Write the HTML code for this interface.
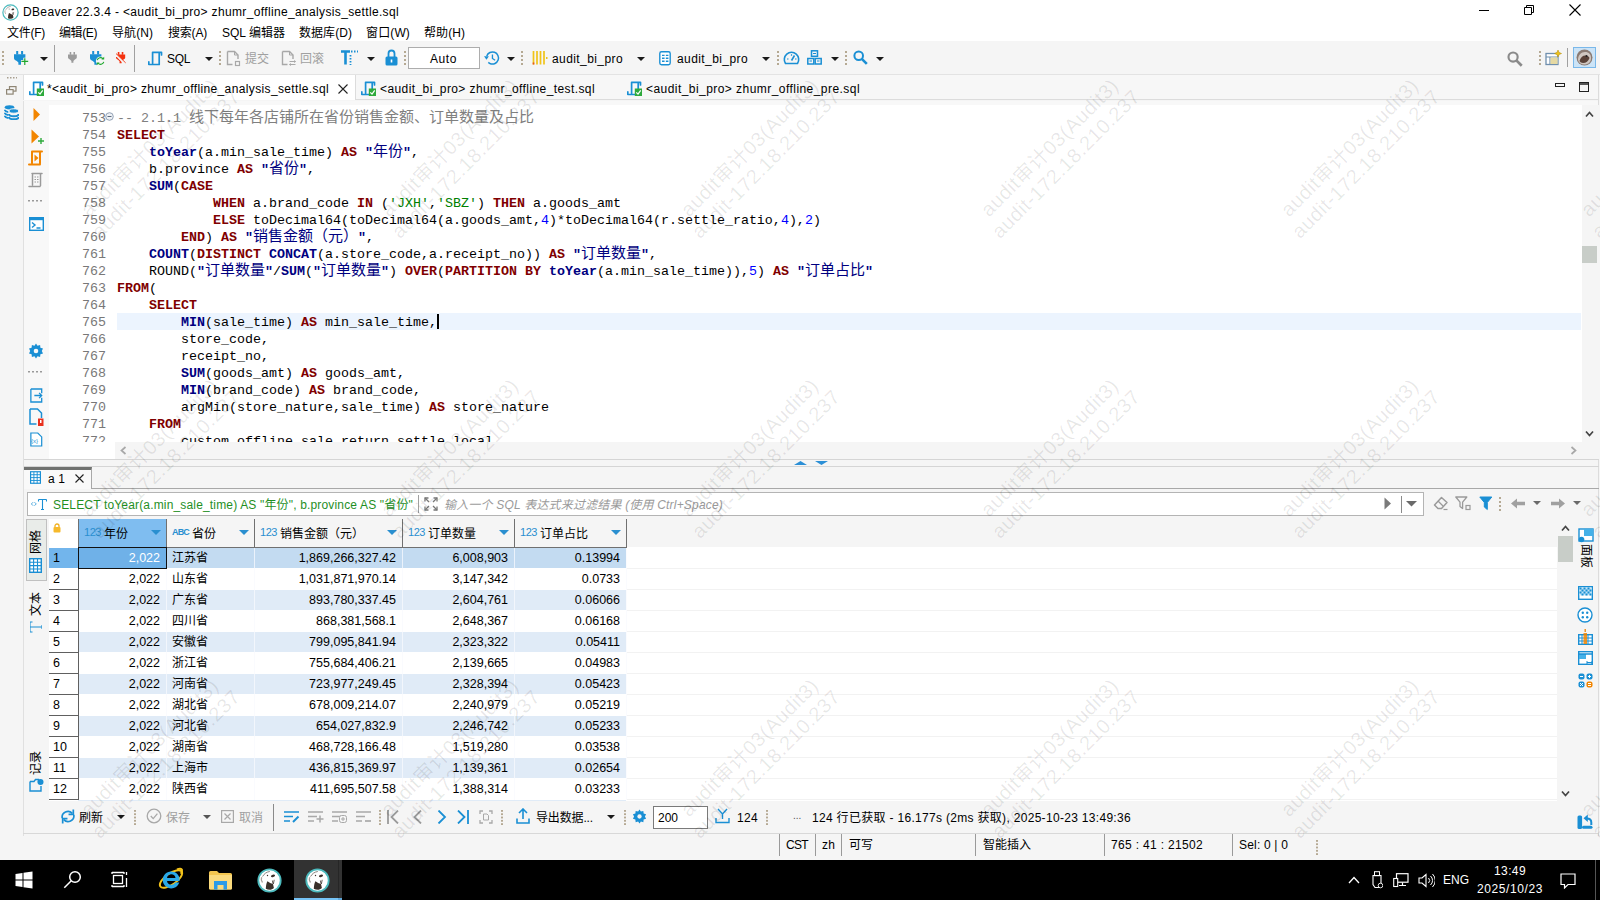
<!DOCTYPE html>
<html lang="zh"><head><meta charset="utf-8"><title>DBeaver</title><style>
html,body{margin:0;padding:0;}
body{width:1600px;height:900px;overflow:hidden;background:#f5f5f5;font-family:"Liberation Sans","Noto Sans CJK SC",sans-serif;position:relative;}
body div,body span.t,body svg,body pre{position:absolute;box-sizing:border-box;}
span.t{white-space:pre;}
pre{margin:0;font-family:"Liberation Mono","Noto Sans CJK SC",monospace;font-size:13.33px;line-height:17px;white-space:pre;color:#000;}
pre b.k{color:#7f0000;} pre b.f{color:#000080;} pre .s{color:#008000;} pre .n{color:#0000ff;}
pre .q{color:#000080;font-weight:bold;} pre .c{color:#808080;}
pre .l{display:block;height:17px;}
pre .z{font-size:15px;font-family:"Noto Sans CJK SC",sans-serif;line-height:0;font-weight:normal;}
.wm{color:rgba(0,0,0,0.095);font-size:20px;letter-spacing:0.55px;line-height:23px;white-space:pre;text-align:center;transform:rotate(-45deg);transform-origin:50% 50%;}
</style></head><body>
<div style="left:0px;top:0px;width:1600px;height:41px;background:#ffffff;"></div>
<svg style="left:2.2px;top:3.5px;" width="17" height="17" viewBox="0 0 25 25"><circle cx="12.500" cy="12.500" r="11.200" fill="#ffffff" stroke="#4cbabd" stroke-width="1.800"/><path d="M10.300 13.300c1.800 1.200 3.800 2.300 5.700 2.700l.9 3.900c-1.200 1.200-2.700 1.800-4.200 1.800-1.400 0-2.800-.3-3.900-.9.200-2.800.5-5.400 1.500-7.500z" fill="#3a302a"/><ellipse cx="16" cy="7.900" rx="2.100" ry="1.200" fill="#3a302a" transform="rotate(-15 16 7.900)"/><circle cx="10.500" cy="7.500" r=".700" fill="#3a302a"/><path d="M5.600 8.500c1.500-2.800 4-4.600 7.200-5" stroke="#6a625c" stroke-width=".800" fill="none"/><path d="M4.600 9.300c-.6 1.800-.3 3.800.9 5.200" stroke="#a8a09a" stroke-width="1.300" fill="none"/><path d="M17.200 11.800l-.8 4.200M15.400 12.500l.6 3.300" stroke="#3a302a" stroke-width=".800" fill="none"/></svg>
<span class="t" style="letter-spacing:0.349px;left:23px;top:3px;font-size:12px;line-height:18px;color:#000;">DBeaver 22.3.4 - &lt;audit_bi_pro&gt; zhumr_offline_analysis_settle.sql</span>
<svg style="left:1478px;top:4px;" width="12" height="12" viewBox="0 0 12 12"><path d="M1 6.500h10" stroke="#000" stroke-width="1" fill="none"/></svg>
<svg style="left:1523px;top:4px;" width="12" height="12" viewBox="0 0 12 12"><path d="M1.500 3.500h7v7h-7zM3.500 3.500v-2h7v7h-2" stroke="#000" stroke-width="1" fill="none"/></svg>
<svg style="left:1568px;top:3px;" width="14" height="14" viewBox="0 0 14 14"><path d="M1.500 1.500l11 11M12.500 1.500l-11 11" stroke="#000" stroke-width="1.100" fill="none"/></svg>
<span class="t" style="letter-spacing:-0.266px;left:7px;top:24px;font-size:12px;line-height:18px;color:#000;">文件(F)</span>
<span class="t" style="letter-spacing:-0.4px;left:59px;top:24px;font-size:12px;line-height:18px;color:#000;">编辑(E)</span>
<span class="t" style="letter-spacing:0.066px;left:112px;top:24px;font-size:12px;line-height:18px;color:#000;">导航(N)</span>
<span class="t" style="letter-spacing:-0.2px;left:168px;top:24px;font-size:12px;line-height:18px;color:#000;">搜索(A)</span>
<span class="t" style="letter-spacing:0.013px;left:222px;top:24px;font-size:12px;line-height:18px;color:#000;">SQL 编辑器</span>
<span class="t" style="letter-spacing:0.055px;left:299px;top:24px;font-size:12px;line-height:18px;color:#000;">数据库(D)</span>
<span class="t" style="letter-spacing:0.134px;left:366px;top:24px;font-size:12px;line-height:18px;color:#000;">窗口(W)</span>
<span class="t" style="letter-spacing:0.066px;left:424px;top:24px;font-size:12px;line-height:18px;color:#000;">帮助(H)</span>
<div style="left:0px;top:41px;width:1600px;height:33px;background:#f5f5f5;"></div>
<svg style="left:2px;top:51px;" width="2" height="14" viewBox="0 0 2 14"><rect x="0" y="0" width="2" height="2" fill="#b5a993"/><rect x="0" y="4" width="2" height="2" fill="#b5a993"/><rect x="0" y="8" width="2" height="2" fill="#b5a993"/><rect x="0" y="12" width="2" height="2" fill="#b5a993"/></svg>
<svg style="left:13.8px;top:51.2px;" width="17.4" height="16" viewBox="0 0 17.400 16.000"><path d="M2.200 0h2v3.500h-2zM7.100 0h2v3.500h-2z" fill="#1a8fd4"/><path d="M0 3.200H11.400V7.200C11.400 8.600 9.600 9.300 8.600 9.900L7 11.600V13.800H4.400V11.600L2.800 9.900C1.800 9.300 0 8.600 0 7.200Z" fill="#1a8fd4"/><path d="M10.800 6.800v7.600M7 10.500h7.500" stroke="#f5f5f5" stroke-width="3"/><path d="M10.800 7.200v6.800M7.400 10.400h6.800" stroke="#1fa82e" stroke-width="1.200"/></svg>
<svg style="left:40px;top:57px;" width="8" height="5.0" viewBox="0 0 8 5.0"><path d="M0 0h8l-4.0 4.0z" fill="#1a1a1a"/></svg>
<div style="left:54px;top:45px;width:1px;height:27px;background:#a0a0a0;"></div>
<svg style="left:68px;top:52px;" width="14.8" height="13.6" viewBox="0 0 19.173 17.618"><path d="M2.200 0h2v3.500h-2zM7.100 0h2v3.500h-2z" fill="#9b9b9b"/><path d="M0 3.200H11.400V7.200C11.400 8.600 9.600 9.300 8.600 9.900L7 11.600V13.800H4.400V11.600L2.800 9.900C1.800 9.300 0 8.600 0 7.200Z" fill="#9b9b9b"/></svg>
<svg style="left:89.6px;top:51.2px;" width="17.4" height="16" viewBox="0 0 17.400 16.000"><path d="M2.200 0h2v3.500h-2zM7.100 0h2v3.500h-2z" fill="#1a8fd4"/><path d="M0 3.200H11.400V7.200C11.400 8.600 9.600 9.300 8.600 9.900L7 11.600V13.800H4.400V11.600L2.800 9.900C1.800 9.300 0 8.600 0 7.200Z" fill="#1a8fd4"/><circle cx="10.500" cy="10" r="4.600" fill="#f5f5f5"/><path d="M7.200 9.200a3.400 3.400 0 0 1 5.800-1.400M13.800 10.800a3.400 3.400 0 0 1-5.800 1.400" stroke="#1fa82e" stroke-width="1.100" fill="none"/><path d="M14.200 5.800v2.800h-2.800zM6.800 14.200v-2.800h2.800z" fill="#1fa82e"/></svg>
<svg style="left:115.6px;top:52px;" width="15.2" height="13.6" viewBox="0 0 18.835 16.852"><path d="M2.200 0h2v3.500h-2zM7.100 0h2v3.500h-2z" fill="#f4320f"/><path d="M0 3.200H11.400V7.200C11.400 8.600 9.600 9.300 8.600 9.900L7 11.600V13.800H4.400V11.600L2.800 9.900C1.800 9.300 0 8.600 0 7.200Z" fill="#f4320f"/><path d="M-1 2.500l12 12" stroke="#f5f5f5" stroke-width="2.600"/><path d="M-2.500 -0.500l14.500 14" stroke="#f4320f" stroke-width="1.100"/></svg>
<div style="left:134px;top:45px;width:1px;height:27px;background:#a0a0a0;"></div>
<svg style="left:148px;top:50.5px;" width="16" height="16" viewBox="0 0 16 16"><path d="M4.600 12.200V1.300h8.900v2.700M11.200 1.300v12.200H0.800v-2.700" stroke="#1a8fd4" stroke-width="1.700" fill="none" stroke-linejoin="round" stroke-linecap="round"/></svg>
<span class="t" style="letter-spacing:-0.339px;left:167px;top:50px;font-size:12px;line-height:18px;color:#000;">SQL</span>
<svg style="left:205px;top:57px;" width="8" height="5.0" viewBox="0 0 8 5.0"><path d="M0 0h8l-4.0 4.0z" fill="#1a1a1a"/></svg>
<svg style="left:219px;top:51px;" width="2" height="14" viewBox="0 0 2 14"><rect x="0" y="0" width="2" height="2" fill="#b5a993"/><rect x="0" y="4" width="2" height="2" fill="#b5a993"/><rect x="0" y="8" width="2" height="2" fill="#b5a993"/><rect x="0" y="12" width="2" height="2" fill="#b5a993"/></svg>
<svg style="left:226px;top:50px;" width="17" height="17" viewBox="0 0 17 17"><path d="M1.500 1.500h7l3.500 3.500v4M1.500 1.500v13h5" stroke="#a8a8a8" stroke-width="1.400" fill="none"/><path d="M8.500 1.500v3.500h3.500" stroke="#a8a8a8" stroke-width="1" fill="none"/><rect x="9.500" y="11.500" width="4" height="4" stroke="#a8a8a8" fill="none" stroke-width="1.200"/></svg>
<span class="t" style="letter-spacing:-0.008px;left:245px;top:50px;font-size:12px;line-height:18px;color:#a0a0a0;">提交</span>
<svg style="left:281px;top:50px;" width="17" height="17" viewBox="0 0 17 17"><path d="M1.500 1.500h7l3.500 3.500v4M1.500 1.500v13h5" stroke="#a8a8a8" stroke-width="1.400" fill="none"/><path d="M8.500 1.500v3.500h3.500" stroke="#a8a8a8" stroke-width="1" fill="none"/><path d="M8.500 11.500h6M8.500 14.500h6" stroke="#a8a8a8" stroke-width="1"/><path d="M13 10l2 1.500-2 1.500zM10 13l-2 1.500 2 1.500z" fill="#a8a8a8"/></svg>
<span class="t" style="letter-spacing:-0.008px;left:300px;top:50px;font-size:12px;line-height:18px;color:#a0a0a0;">回滚</span>
<svg style="left:341px;top:50px;" width="18" height="16" viewBox="0 0 18 16"><path d="M0 1.500h9M4.500 1.500v13" stroke="#1a8fd4" stroke-width="2.600"/><path d="M10 1.500h7M9.500 5v10" stroke="#1a8fd4" stroke-width="1.800" stroke-dasharray="1.500 1.500"/></svg>
<svg style="left:367px;top:57px;" width="8" height="5.0" viewBox="0 0 8 5.0"><path d="M0 0h8l-4.0 4.0z" fill="#1a1a1a"/></svg>
<svg style="left:385px;top:49px;" width="13" height="17" viewBox="0 0 13 17"><path d="M3.500 8v-3.500a3 3 0 0 1 6 0v3.500" stroke="#1a8fd4" stroke-width="1.800" fill="none"/><rect x="0.500" y="7.500" width="12" height="9" rx="1.500" fill="#1a8fd4"/><rect x="5.700" y="10.500" width="1.600" height="3" fill="#fff"/></svg>
<svg style="left:404px;top:51px;" width="2" height="14" viewBox="0 0 2 14"><rect x="0" y="0" width="2" height="2" fill="#b5a993"/><rect x="0" y="4" width="2" height="2" fill="#b5a993"/><rect x="0" y="8" width="2" height="2" fill="#b5a993"/><rect x="0" y="12" width="2" height="2" fill="#b5a993"/></svg>
<div style="left:408px;top:47px;width:72px;height:22px;background:#fff;border:1px solid #adadad;"></div>
<span class="t" style="letter-spacing:0.578px;left:430px;top:50px;font-size:12px;line-height:18px;color:#000;">Auto</span>
<svg style="left:484px;top:50px;" width="16" height="16" viewBox="0 0 18 18"><circle cx="9.500" cy="9" r="6.800" stroke="#1a8fd4" stroke-width="1.700" fill="none" stroke-dasharray="34 9" transform="rotate(200 9.500 9)"/><path d="M9.500 5v4.500l3 2" stroke="#1a8fd4" stroke-width="1.500" fill="none"/><path d="M0 7h5.500l-2.700 4z" fill="#1a8fd4"/></svg>
<svg style="left:507px;top:57px;" width="8" height="5.0" viewBox="0 0 8 5.0"><path d="M0 0h8l-4.0 4.0z" fill="#1a1a1a"/></svg>
<svg style="left:521px;top:51px;" width="2" height="14" viewBox="0 0 2 14"><rect x="0" y="0" width="2" height="2" fill="#b5a993"/><rect x="0" y="4" width="2" height="2" fill="#b5a993"/><rect x="0" y="8" width="2" height="2" fill="#b5a993"/><rect x="0" y="12" width="2" height="2" fill="#b5a993"/></svg>
<svg style="left:532px;top:51px;" width="16" height="14" viewBox="0 0 16 14"><path d="M1.500 0v13.500M5 0v13.500M8.500 0v13.500M12 0v13.500" stroke="#f0c419" stroke-width="1.700"/><rect x="0.700" y="11.500" width="1.600" height="2" fill="#e8501e"/><rect x="14" y="6" width="1.500" height="2" fill="#f0c419"/></svg>
<span class="t" style="letter-spacing:0.411px;left:552px;top:50px;font-size:12px;line-height:18px;color:#000;">audit_bi_pro</span>
<svg style="left:637px;top:57px;" width="8" height="5.0" viewBox="0 0 8 5.0"><path d="M0 0h8l-4.0 4.0z" fill="#1a1a1a"/></svg>
<svg style="left:658.5px;top:51px;" width="12" height="14.5" viewBox="0 0 14 17"><rect x="0.900" y="0.900" width="12.200" height="15.200" rx="2" stroke="#1a8fd4" stroke-width="1.600" fill="#fff"/><path d="M3.500 5h3M3.500 8.500h3M3.500 12h3M8 5h3M8 8.500h3M8 12h3" stroke="#1a8fd4" stroke-width="1.500"/></svg>
<span class="t" style="letter-spacing:0.411px;left:677px;top:50px;font-size:12px;line-height:18px;color:#000;">audit_bi_pro</span>
<svg style="left:762px;top:57px;" width="8" height="5.0" viewBox="0 0 8 5.0"><path d="M0 0h8l-4.0 4.0z" fill="#1a1a1a"/></svg>
<svg style="left:777px;top:51px;" width="2" height="14" viewBox="0 0 2 14"><rect x="0" y="0" width="2" height="2" fill="#b5a993"/><rect x="0" y="4" width="2" height="2" fill="#b5a993"/><rect x="0" y="8" width="2" height="2" fill="#b5a993"/><rect x="0" y="12" width="2" height="2" fill="#b5a993"/></svg>
<svg style="left:783px;top:50px;" width="17" height="15" viewBox="0 0 17 15"><path d="M2.500 13.500a7.200 7.200 0 1 1 12 0z" stroke="#1a8fd4" stroke-width="1.600" fill="none" stroke-linejoin="round"/><path d="M8.500 10.500l3-5" stroke="#1a8fd4" stroke-width="1.600"/><path d="M4 9h1.500M8.500 4.200v1.500M12 9h1.500" stroke="#1a8fd4" stroke-width="1.200"/></svg>
<svg style="left:807px;top:50px;" width="15" height="15" viewBox="0 0 15 15"><rect x="4.500" y="0.800" width="6" height="5.500" stroke="#1a8fd4" stroke-width="1.500" fill="none"/><rect x="0.800" y="8.500" width="6" height="5.500" stroke="#1a8fd4" stroke-width="1.500" fill="none"/><rect x="8.200" y="8.500" width="6" height="5.500" stroke="#1a8fd4" stroke-width="1.500" fill="none"/><path d="M6 3.500h3M2.500 11h2.500M10 11h2.500" stroke="#1a8fd4" stroke-width="1"/></svg>
<svg style="left:831px;top:57px;" width="8" height="5.0" viewBox="0 0 8 5.0"><path d="M0 0h8l-4.0 4.0z" fill="#1a1a1a"/></svg>
<svg style="left:845px;top:51px;" width="2" height="14" viewBox="0 0 2 14"><rect x="0" y="0" width="2" height="2" fill="#b5a993"/><rect x="0" y="4" width="2" height="2" fill="#b5a993"/><rect x="0" y="8" width="2" height="2" fill="#b5a993"/><rect x="0" y="12" width="2" height="2" fill="#b5a993"/></svg>
<svg style="left:853px;top:50px;" width="15" height="15" viewBox="0 0 15 15"><circle cx="5.700" cy="5.700" r="4.300" stroke="#1a8fd4" stroke-width="2" fill="none"/><path d="M8.800 8.800l5 5" stroke="#1a8fd4" stroke-width="2.600"/></svg>
<svg style="left:876px;top:57px;" width="8" height="5.0" viewBox="0 0 8 5.0"><path d="M0 0h8l-4.0 4.0z" fill="#1a1a1a"/></svg>
<svg style="left:1507px;top:51px;" width="16" height="16" viewBox="0 0 15 15"><circle cx="5.700" cy="5.700" r="4.300" stroke="#8a8a8a" stroke-width="2" fill="none"/><path d="M8.800 8.800l5 5" stroke="#8a8a8a" stroke-width="2.600"/></svg>
<svg style="left:1539px;top:51px;" width="2" height="14" viewBox="0 0 2 14"><rect x="0" y="0" width="2" height="2" fill="#b5a993"/><rect x="0" y="4" width="2" height="2" fill="#b5a993"/><rect x="0" y="8" width="2" height="2" fill="#b5a993"/><rect x="0" y="12" width="2" height="2" fill="#b5a993"/></svg>
<svg style="left:1545px;top:50px;" width="17" height="16" viewBox="0 0 17 16"><rect x="1" y="3.500" width="12" height="11" fill="#fff" stroke="#6f8fae" stroke-width="1.300"/><path d="M1 7h12M5 7v7.500" stroke="#6f8fae" stroke-width="1.200"/><rect x="5.500" y="7.500" width="7" height="6.500" fill="#e5d9a3"/><path d="M13 0l1 2.500 2.500 1-2.500 1-1 2.500-1-2.500-2.500-1 2.500-1z" fill="#f0c419" stroke="#b89210" stroke-width=".6"/></svg>
<div style="left:1567px;top:48px;width:1px;height:19px;background:#a0a0a0;"></div>
<div style="left:1573px;top:47px;width:23px;height:21px;background:#cce4f7;border:1px solid #7ab8ea;"></div>
<svg style="left:1576px;top:49px;" width="17" height="17" viewBox="0 0 17 17"><circle cx="8.500" cy="8.500" r="8" fill="#8a7a72"/><path d="M2 11c0-5 3-8 7-8s6 2.500 6 6-2 6-6 6.500c-3 .3-6-1-7-4.500z" fill="#cfc6c0"/><path d="M3.500 12c1-3.500 3-5.500 6-5.500 2 0 3.500 1 4 2.500-1 3-3.500 5-6.500 5-1.500 0-2.800-.8-3.500-2z" fill="#5a4238"/><circle cx="10.500" cy="7" r="1" fill="#222"/></svg>
<div style="left:0px;top:74px;width:1600px;height:1px;background:#e3e3e3;"></div>
<svg style="left:7px;top:76.5px;" width="10" height="2" viewBox="0 0 10 2"><rect x="0" y="0" width="1.500" height="1.500" fill="#a89f90"/><rect x="3" y="0" width="1.500" height="1.500" fill="#a89f90"/><rect x="6" y="0" width="1.500" height="1.500" fill="#a89f90"/><rect x="9" y="0" width="1.500" height="1.500" fill="#a89f90"/></svg>
<svg style="left:6px;top:86px;" width="11" height="9" viewBox="0 0 11 9"><rect x="3.500" y="0.600" width="6.500" height="4.500" fill="none" stroke="#8f8675" stroke-width="1.200"/><rect x="0.600" y="3.600" width="6.500" height="4.500" fill="#f5f5f5" stroke="#8f8675" stroke-width="1.200"/></svg>
<div style="left:23px;top:75px;width:1575px;height:25px;background:#f7f7f7;border-bottom:1px solid #dcdcdc;"></div>
<div style="left:23px;top:75px;width:333px;height:25px;background:#ffffff;border-right:1px solid #dcdcdc;border-left:1px solid #e0e0e0;"></div>
<svg style="left:29px;top:80.5px;" width="16" height="16" viewBox="0 0 16 16"><path d="M4.600 12.200V1.300h8.900v2.700M11.200 1.300v12.200H0.800v-2.700" stroke="#1a8fd4" stroke-width="1.700" fill="none" stroke-linejoin="round" stroke-linecap="round"/><rect x="7.800" y="7.500" width="7.200" height="7.500" fill="#2eaa3c"/><path d="M9.300 11.300l1.700 1.800 2.700-3.800" stroke="#fff" stroke-width="1.200" fill="none"/></svg>
<span class="t" style="letter-spacing:0.368px;left:47px;top:80px;font-size:12px;line-height:18px;color:#000;">*&lt;audit_bi_pro&gt; zhumr_offline_analysis_settle.sql</span>
<svg style="left:338px;top:84px;" width="10" height="10" viewBox="0 0 10 10"><path d="M0.500 0.500l9 9M9.500 0.500l-9 9" stroke="#222" stroke-width="1.100"/></svg>
<svg style="left:360.6px;top:80.5px;" width="16" height="16" viewBox="0 0 16 16"><path d="M4.600 12.200V1.300h8.900v2.700M11.200 1.300v12.200H0.800v-2.700" stroke="#1a8fd4" stroke-width="1.700" fill="none" stroke-linejoin="round" stroke-linecap="round"/><rect x="7.800" y="7.500" width="7.200" height="7.500" fill="#2eaa3c"/><path d="M9.300 11.300l1.700 1.800 2.700-3.800" stroke="#fff" stroke-width="1.200" fill="none"/></svg>
<span class="t" style="letter-spacing:0.408px;left:380px;top:80px;font-size:12px;line-height:18px;color:#000;">&lt;audit_bi_pro&gt; zhumr_offline_test.sql</span>
<svg style="left:626.6px;top:80.5px;" width="16" height="16" viewBox="0 0 16 16"><path d="M4.600 12.200V1.300h8.900v2.700M11.200 1.300v12.200H0.800v-2.700" stroke="#1a8fd4" stroke-width="1.700" fill="none" stroke-linejoin="round" stroke-linecap="round"/><rect x="7.800" y="7.500" width="7.200" height="7.500" fill="#2eaa3c"/><path d="M9.300 11.300l1.700 1.800 2.700-3.800" stroke="#fff" stroke-width="1.200" fill="none"/></svg>
<span class="t" style="letter-spacing:0.447px;left:646px;top:80px;font-size:12px;line-height:18px;color:#000;">&lt;audit_bi_pro&gt; zhumr_offline_pre.sql</span>
<svg style="left:1555px;top:83px;" width="10" height="4" viewBox="0 0 10 4"><rect x="0.500" y="0.500" width="9" height="3" fill="none" stroke="#222" stroke-width="1"/></svg>
<svg style="left:1579px;top:82px;" width="10" height="10" viewBox="0 0 10 10"><rect x="0.500" y="0.500" width="9" height="9" fill="none" stroke="#222" stroke-width="1"/><path d="M0.500 2h9" stroke="#222" stroke-width="1.500"/></svg>
<div style="left:23px;top:101px;width:1px;height:735px;background:#e0e0e0;"></div>
<div style="left:24px;top:101px;width:1575px;height:358px;background:#f8f8f8;"></div>
<div style="left:1598px;top:75px;width:1px;height:761px;background:#dcdcdc;"></div>
<svg style="left:3.8px;top:104.5px;" width="15" height="15" viewBox="0 0 15 15"><ellipse cx="5.500" cy="2.300" rx="4.800" ry="2.100" fill="#1a8fd4"/><path d="M0.800 4.800c0 1.200 1.500 2 3.500 2.300M0.800 7.800c0 1.200 1.500 2 3.500 2.300M0.800 10.800c0 1.200 1.500 2 3.500 2.300" stroke="#1a8fd4" stroke-width="1.800" fill="none"/><ellipse cx="9.800" cy="6" rx="4.800" ry="2.200" fill="#1a8fd4" stroke="#f5f5f5" stroke-width="1"/><path d="M5 9c0 1.300 2.200 2.300 4.800 2.300s4.800-1 4.800-2.300M5 12c0 1.300 2.200 2.300 4.800 2.300s4.800-1 4.800-2.300" stroke="#1a8fd4" stroke-width="1.900" fill="none"/></svg>
<div style="left:49px;top:105px;width:1533px;height:337px;background:#ffffff;"></div>
<div style="left:49px;top:442px;width:66px;height:17px;background:#ffffff;"></div>
<div style="left:117px;top:313px;width:1464px;height:17px;background:#ecf4fe;"></div>
<svg style="left:32.5px;top:107.5px;" width="8" height="13" viewBox="0 0 8 13"><path d="M0.500 0l6.500 6.500-6.500 6.500z" fill="#f28500"/></svg>
<svg style="left:30px;top:129px;" width="16" height="16" viewBox="0 0 16 16"><path d="M1.500 0.500l7.500 7-7.500 7z" fill="#f28500"/><path d="M11 9v6M8 12h6" stroke="#2eaa3c" stroke-width="1.400"/></svg>
<svg style="left:28px;top:150px;" width="16" height="17" viewBox="0 0 16 17"><path d="M4 1.500h10M12 1.500v12M4 2v11M1 14.500h11" stroke="#f28500" stroke-width="2" fill="none" stroke-linecap="round"/><path d="M6.500 4.500l4 3.500-4 3.500z" fill="#f28500"/></svg>
<svg style="left:28px;top:172px;" width="16" height="17" viewBox="0 0 16 17"><path d="M4 1.500h10M12.500 1.500v12M4.500 2v11M1 14.500h11" stroke="#9a9a9a" stroke-width="1.500" fill="none" stroke-linecap="round"/><path d="M6.500 5h4.500M6.500 7.500h4.500M6.500 10h4.500" stroke="#9a9a9a" stroke-width="1" stroke-dasharray="1.500 1"/></svg>
<svg style="left:28px;top:200px;" width="14" height="2" viewBox="0 0 14 2"><rect x="0" y="0" width="2" height="1.500" fill="#9a9a9a"/><rect x="4" y="0" width="2" height="1.500" fill="#9a9a9a"/><rect x="8" y="0" width="2" height="1.500" fill="#9a9a9a"/><rect x="12" y="0" width="2" height="1.500" fill="#9a9a9a"/></svg>
<svg style="left:29px;top:217px;" width="15" height="14" viewBox="0 0 15 14"><rect x="0.700" y="0.700" width="13.600" height="12.600" fill="#fff" stroke="#1a8fd4" stroke-width="1.400"/><rect x="0.700" y="0.700" width="13.600" height="2.500" fill="#1a8fd4"/><path d="M3 5.500l3 2.500-3 2.500M7.500 11h4" stroke="#1a8fd4" stroke-width="1.400" fill="none"/></svg>
<svg style="left:28px;top:343px;" width="16" height="16" viewBox="0 0 16 16"><path d="M8 0.500l1.500 2.200 2.600-.7.300 2.700 2.600.8-1.200 2.500 1.200 2.500-2.600.8-.3 2.700-2.600-.7-1.500 2.200-1.500-2.200-2.600.7-.3-2.700-2.600-.8 1.200-2.500-1.200-2.500 2.600-.8.300-2.700 2.600.7z" fill="#1a8fd4"/><circle cx="8" cy="8" r="2.300" fill="#f8f8f8"/></svg>
<svg style="left:28px;top:371px;" width="14" height="2" viewBox="0 0 14 2"><rect x="0" y="0" width="2" height="1.500" fill="#9a9a9a"/><rect x="4" y="0" width="2" height="1.500" fill="#9a9a9a"/><rect x="8" y="0" width="2" height="1.500" fill="#9a9a9a"/><rect x="12" y="0" width="2" height="1.500" fill="#9a9a9a"/></svg>
<svg style="left:30px;top:388px;" width="13" height="15" viewBox="0 0 15 17"><path d="M1 1h12.500v5M13.500 11v5h-12.500v-15" stroke="#1a8fd4" stroke-width="1.500" fill="none"/><path d="M5 8.500h8M10.500 5.500l3 3-3 3" stroke="#1a8fd4" stroke-width="1.500" fill="none"/></svg>
<svg style="left:29px;top:408px;" width="15" height="19" viewBox="0 0 15 19"><path d="M1 1h7.500l4 4v5M1 1v15h6.500" stroke="#1a8fd4" stroke-width="1.500" fill="none"/><rect x="9" y="10.500" width="5.500" height="7.500" fill="#e8301e"/><rect x="11" y="12" width="1.500" height="3" fill="#fff"/></svg>
<svg style="left:30px;top:432px;" width="13" height="15" viewBox="0 0 15 17"><path d="M1 1h8l4.500 4.500v10.500h-12.500z" stroke="#1a8fd4" stroke-width="1.400" fill="#fff"/></svg>
<span class="t" style="left:31px;top:437px;font-size:6px;line-height:8px;color:#1a8fd4;">{x}</span>
<div style="left:49px;top:105px;width:1533px;height:337px;overflow:hidden;">
<pre style="left:33px;top:5px;color:#787878;">753
754
755
756
757
758
759
760
761
762
763
764
765
766
767
768
769
770
771
772</pre>
<pre style="left:68px;top:5px;"><span class="l"><span class="c">-- 2.1.1 <span class="z">线下每年各店铺所在省份销售金额、订单数量及占比</span></span></span><span class="l"><b class="k">SELECT</b></span><span class="l">    <b class="f">toYear</b>(a.min_sale_time) <b class="k">AS</b> <span class="q">"<span class="z">年份</span>"</span>,</span><span class="l">    b.province <b class="k">AS</b> <span class="q">"<span class="z">省份</span>"</span>,</span><span class="l">    <b class="f">SUM</b>(<b class="k">CASE</b></span><span class="l">            <b class="k">WHEN</b> a.brand_code <b class="k">IN</b> (<span class="s">&#39;JXH&#39;</span>,<span class="s">&#39;SBZ&#39;</span>) <b class="k">THEN</b> a.goods_amt</span><span class="l">            <b class="k">ELSE</b> toDecimal64(toDecimal64(a.goods_amt,<span class="n">4</span>)*toDecimal64(r.settle_ratio,<span class="n">4</span>),<span class="n">2</span>)</span><span class="l">        <b class="k">END</b>) <b class="k">AS</b> <span class="q">"<span class="z">销售金额（元）</span>"</span>,</span><span class="l">    <b class="f">COUNT</b>(<b class="k">DISTINCT</b> <b class="f">CONCAT</b>(a.store_code,a.receipt_no)) <b class="k">AS</b> <span class="q">"<span class="z">订单数量</span>"</span>,</span><span class="l">    ROUND(<span class="q">"<span class="z">订单数量</span>"</span>/<b class="f">SUM</b>(<span class="q">"<span class="z">订单数量</span>"</span>) <b class="k">OVER</b>(<b class="k">PARTITION</b> <b class="k">BY</b> <b class="f">toYear</b>(a.min_sale_time)),<span class="n">5</span>) <b class="k">AS</b> <span class="q">"<span class="z">订单占比</span>"</span></span><span class="l"><b class="k">FROM</b>(</span><span class="l">    <b class="k">SELECT</b></span><span class="l">        <b class="f">MIN</b>(sale_time) <b class="k">AS</b> min_sale_time,</span><span class="l">        store_code,</span><span class="l">        receipt_no,</span><span class="l">        <b class="f">SUM</b>(goods_amt) <b class="k">AS</b> goods_amt,</span><span class="l">        <b class="f">MIN</b>(brand_code) <b class="k">AS</b> brand_code,</span><span class="l">        argMin(store_nature,sale_time) <b class="k">AS</b> store_nature</span><span class="l">    <b class="k">FROM</b></span><span class="l">        custom_offline_sale_return_settle_local</span></pre>
</div>
<svg style="left:105px;top:112px;" width="9" height="9" viewBox="0 0 9 9"><circle cx="4.500" cy="4.500" r="3.800" fill="#eef1f5" stroke="#8a9ab0" stroke-width="0.900"/><path d="M2.500 4.500h4" stroke="#5a6a80" stroke-width="1"/></svg>
<div style="left:437px;top:314px;width:2px;height:15px;background:#000;"></div>
<div style="left:1582px;top:105px;width:17px;height:337px;background:#f5f5f5;"></div>
<svg style="left:1585px;top:111px;" width="9" height="7" viewBox="0 0 9 7"><path d="M1 5.500l3.500-4 3.500 4" stroke="#444" stroke-width="1.700" fill="none"/></svg>
<svg style="left:1585px;top:430px;" width="9" height="7" viewBox="0 0 9 7"><path d="M1 1.500l3.500 4 3.500-4" stroke="#444" stroke-width="1.700" fill="none"/></svg>
<div style="left:1582px;top:246px;width:15px;height:17px;background:#c8cdc8;"></div>
<div style="left:1582px;top:442px;width:17px;height:17px;background:#f5f5f5;"></div>
<div style="left:115px;top:442px;width:1467px;height:17px;background:#f5f5f5;"></div>
<svg style="left:120px;top:446px;" width="7" height="9" viewBox="0 0 7 9"><path d="M5.500 1l-4 3.500 4 3.500" stroke="#a8a8a8" stroke-width="1.700" fill="none"/></svg>
<svg style="left:1570px;top:446px;" width="7" height="9" viewBox="0 0 7 9"><path d="M1.500 1l4 3.500-4 3.500" stroke="#a8a8a8" stroke-width="1.700" fill="none"/></svg>
<div style="left:24px;top:459px;width:1575px;height:1px;background:#d5d5d5;"></div>
<div style="left:24px;top:466px;width:1575px;height:1px;background:#d5d5d5;"></div>
<svg style="left:794px;top:461px;" width="13" height="4" viewBox="0 0 13 4"><path d="M0 4l6.500-4 6.500 4z" fill="#2b8fd6"/></svg>
<svg style="left:815px;top:461px;" width="13" height="4" viewBox="0 0 13 4"><path d="M0 0h13l-6.500 4z" fill="#2b8fd6"/></svg>
<div style="left:24px;top:488px;width:1575px;height:1px;background:#a8a8a8;"></div>
<div style="left:24px;top:466.5px;width:68px;height:22.5px;background:#f9f9f9;border-top:3px solid #707270;border-right:1px solid #a8a8a8;"></div>
<svg style="left:30px;top:471px;" width="11" height="13" viewBox="0 0 13 15"><rect x="0.700" y="0.700" width="11.600" height="13.600" fill="#fff" stroke="#1a8fd4" stroke-width="1.400"/><path d="M0.700 4.200h11.600M0.700 7.600h11.600M0.700 11h11.600M4.600 1v13.500M8.500 1v13.500" stroke="#1a8fd4" stroke-width="1.100"/></svg>
<span class="t" style="letter-spacing:0.104px;left:48px;top:470px;font-size:12px;line-height:18px;color:#000;">a 1</span>
<svg style="left:75px;top:474px;" width="9" height="9" viewBox="0 0 9 9"><path d="M0.500 0.500l8 8M8.500 0.500l-8 8" stroke="#222" stroke-width="1.100"/></svg>
<div style="left:27px;top:492px;width:1397px;height:24px;background:#ffffff;border:1px solid #b4b4b4;"></div>
<svg style="left:31px;top:498px;" width="16" height="12" viewBox="0 0 16 12"><path d="M3 3.500l-2.500 2.500 2.500 2.500M5 3.500l2.500 2.500-2.500 2.500" stroke="#1a8fd4" stroke-width="1.100" fill="none" transform="scale(.7) translate(0 2.500)"/><path d="M7.500 1.500h8M11.500 1.500v10M10 11.500h3M7.500 1.500v2M15.500 1.500v2" stroke="#1a8fd4" stroke-width="1.100" fill="none"/></svg>
<span class="t" style="letter-spacing:0.163px;left:53px;top:496px;font-size:12px;line-height:18px;color:#1f8f1f;">SELECT toYear(a.min_sale_time) AS &quot;年份&quot;, b.province AS &quot;省份&quot;</span>
<div style="left:418px;top:495px;width:1px;height:18px;background:#a0a0a0;"></div>
<svg style="left:424px;top:497px;" width="14" height="14" viewBox="0 0 14 14"><path d="M1 4.500v-3.500h3.500M9.500 1h3.500v3.500M13 9.500v3.500h-3.500M4.500 13h-3.500v-3.500" stroke="#777" stroke-width="1.300" fill="none"/><path d="M1 1l4 4M13 1l-4 4M13 13l-4-4M1 13l4-4" stroke="#777" stroke-width="1.300"/></svg>
<span class="t" style="letter-spacing:0.187px;left:444px;top:496px;font-size:12px;line-height:18px;color:#9a9a9a;font-style:italic;">输入一个 SQL 表达式来过滤结果 (使用 Ctrl+Space)</span>
<svg style="left:1384px;top:497px;" width="8" height="13" viewBox="0 0 8 13"><path d="M0.500 0.500l6.500 6-6.500 6z" fill="#7a7a7a"/></svg>
<div style="left:1401px;top:496px;width:1px;height:17px;background:#8a8a8a;"></div>
<svg style="left:1406px;top:501px;" width="11" height="6.5" viewBox="0 0 11 6.5"><path d="M0 0h11l-5.5 5.5z" fill="#6a6a6a"/></svg>
<svg style="left:1433px;top:496px;" width="16" height="15" viewBox="0 0 16 15"><path d="M8.500 1.500l5.500 5-5.500 6h-3.500l-3.500-3.500z" fill="#f5f5f5" stroke="#9a9a9a" stroke-width="1.500" stroke-linejoin="round"/><path d="M5 5l5 5" stroke="#9a9a9a" stroke-width="1.200"/><path d="M10.500 13.500h4" stroke="#9a9a9a" stroke-width="1.200"/></svg>
<svg style="left:1455px;top:496px;" width="16" height="15" viewBox="0 0 16 15"><path d="M0.800 1h11l-4.200 5.200v6.300l-2.600-2v-4.300z" fill="none" stroke="#9a9a9a" stroke-width="1.300" stroke-linejoin="round"/><rect x="11" y="9.500" width="4" height="4" fill="none" stroke="#9a9a9a" stroke-width="1.200"/></svg>
<svg style="left:1479px;top:496px;" width="14" height="15" viewBox="0 0 14 15"><path d="M0.800 1h12l-4.500 5.500v7l-3-2.500v-4.500z" fill="#1a8fd4" stroke="#1a8fd4" stroke-width="1" stroke-linejoin="round"/></svg>
<svg style="left:1499px;top:497px;" width="2" height="15" viewBox="0 0 2 15"><rect x="0" y="0" width="2" height="2" fill="#b5a993"/><rect x="0" y="4" width="2" height="2" fill="#b5a993"/><rect x="0" y="8" width="2" height="2" fill="#b5a993"/><rect x="0" y="12" width="2" height="2" fill="#b5a993"/></svg>
<svg style="left:1511px;top:498px;" width="14" height="11" viewBox="0 0 14 11"><path d="M0 5.500l6-5v3.300h8v3.400h-8v3.300z" fill="#a0a0a0"/></svg>
<svg style="left:1533px;top:501px;" width="8" height="5.0" viewBox="0 0 8 5.0"><path d="M0 0h8l-4.0 4.0z" fill="#6a6a6a"/></svg>
<svg style="left:1551px;top:498px;" width="14" height="11" viewBox="0 0 14 11"><path d="M14 5.500l-6-5v3.300h-8v3.400h8v3.300z" fill="#a0a0a0"/></svg>
<svg style="left:1573px;top:501px;" width="8" height="5.0" viewBox="0 0 8 5.0"><path d="M0 0h8l-4.0 4.0z" fill="#6a6a6a"/></svg>
<div style="left:26px;top:519px;width:21px;height:62px;background:#e9ece9;border:1px solid #c0c0c0;"></div>
<span class="t" style="left:28px;top:554px;font-size:12px;line-height:16px;transform:rotate(-90deg);transform-origin:0 0;">网格</span>
<svg style="left:29px;top:558px;" width="13" height="15" viewBox="0 0 13 15"><rect x="0.700" y="0.700" width="11.600" height="13.600" fill="#fff" stroke="#1a8fd4" stroke-width="1.400"/><path d="M0.700 4.200h11.600M0.700 7.600h11.600M0.700 11h11.600M4.600 1v13.500M8.500 1v13.500" stroke="#1a8fd4" stroke-width="1.100"/></svg>
<span class="t" style="left:28px;top:616px;font-size:12px;line-height:16px;transform:rotate(-90deg);transform-origin:0 0;">文本</span>
<svg style="left:30px;top:620px;" width="12" height="14" viewBox="0 0 12 14"><path d="M1 1h10M6 1v12M4 13h4M1 1v2.500M11 1v2.500" stroke="#1a8fd4" stroke-width="1.100" fill="none" transform="rotate(-90 6 7)"/></svg>
<span class="t" style="left:28px;top:775px;font-size:12px;line-height:16px;transform:rotate(-90deg);transform-origin:0 0;">记录</span>
<svg style="left:29px;top:778px;" width="15" height="14" viewBox="0 0 15 14"><path d="M1 3.500h4l1.500-2h3v3M1 3.500v9.500h11v-5" stroke="#1a8fd4" stroke-width="1.400" fill="none"/><circle cx="11.500" cy="4" r="3" fill="#1a8fd4"/></svg>
<div style="left:49px;top:519px;width:1508px;height:282px;background:#ffffff;"></div>
<div style="left:49px;top:519px;width:1508px;height:28px;background:#f5f5f5;"></div>
<div style="left:49px;top:519px;width:29px;height:28px;background:#ffffff;"></div>
<div style="left:78px;top:519px;width:89px;height:29px;background:#7fbdf0;border-right:1px solid #707070;border-bottom:1px solid #707070;border-left:1px solid #707070;"></div>
<span class="t" style="letter-spacing:-0.453px;left:84px;top:524px;font-size:11px;line-height:16px;color:#2a8fd0;">123</span>
<span class="t" style="left:104px;top:525px;font-size:12px;line-height:18px;color:#000;">年份</span>
<svg style="left:151px;top:530px;" width="10" height="6.0" viewBox="0 0 10 6.0"><path d="M0 0h10l-5.0 5.0z" fill="#2a8fd0"/></svg>
<div style="left:166px;top:519px;width:89px;height:29px;background:#f5f5f5;border-right:1px solid #707070;border-bottom:1px solid #707070;border-left:1px solid #707070;"></div>
<span class="t" style="letter-spacing:-0.833px;left:172px;top:525px;font-size:9px;line-height:14px;color:#2a8fd0;font-weight:bold;">ABC</span>
<span class="t" style="left:192px;top:525px;font-size:12px;line-height:18px;color:#000;">省份</span>
<svg style="left:239px;top:530px;" width="10" height="6.0" viewBox="0 0 10 6.0"><path d="M0 0h10l-5.0 5.0z" fill="#2a8fd0"/></svg>
<div style="left:254px;top:519px;width:149px;height:29px;background:#f5f5f5;border-right:1px solid #707070;border-bottom:1px solid #707070;border-left:1px solid #707070;"></div>
<span class="t" style="letter-spacing:-0.453px;left:260px;top:524px;font-size:11px;line-height:16px;color:#2a8fd0;">123</span>
<span class="t" style="left:280px;top:525px;font-size:12px;line-height:18px;color:#000;">销售金额（元）</span>
<svg style="left:387px;top:530px;" width="10" height="6.0" viewBox="0 0 10 6.0"><path d="M0 0h10l-5.0 5.0z" fill="#2a8fd0"/></svg>
<div style="left:402px;top:519px;width:113px;height:29px;background:#f5f5f5;border-right:1px solid #707070;border-bottom:1px solid #707070;border-left:1px solid #707070;"></div>
<span class="t" style="letter-spacing:-0.453px;left:408px;top:524px;font-size:11px;line-height:16px;color:#2a8fd0;">123</span>
<span class="t" style="left:428px;top:525px;font-size:12px;line-height:18px;color:#000;">订单数量</span>
<svg style="left:499px;top:530px;" width="10" height="6.0" viewBox="0 0 10 6.0"><path d="M0 0h10l-5.0 5.0z" fill="#2a8fd0"/></svg>
<div style="left:514px;top:519px;width:113px;height:29px;background:#f5f5f5;border-right:1px solid #707070;border-bottom:1px solid #707070;border-left:1px solid #707070;"></div>
<span class="t" style="letter-spacing:-0.453px;left:520px;top:524px;font-size:11px;line-height:16px;color:#2a8fd0;">123</span>
<span class="t" style="left:540px;top:525px;font-size:12px;line-height:18px;color:#000;">订单占比</span>
<svg style="left:611px;top:530px;" width="10" height="6.0" viewBox="0 0 10 6.0"><path d="M0 0h10l-5.0 5.0z" fill="#2a8fd0"/></svg>
<svg style="left:53px;top:523px;" width="8" height="10" viewBox="0 0 8 10"><path d="M2 4.500v-1.500a2 2 0 0 1 4 0v1.500" stroke="#f0b020" stroke-width="1.300" fill="none"/><rect x="0.500" y="4" width="7" height="5.500" rx="1" fill="#f6b92b"/></svg>
<div style="left:78px;top:548px;width:548px;height:20px;background:#c3dbf1;"></div>
<div style="left:627px;top:568px;width:930px;height:1px;background:#f2f2f2;"></div>
<div style="left:49px;top:548px;width:30px;height:20px;background:#72b5ec;border-right:1px solid #606060;"></div>
<span class="t" style="left:53px;top:549px;font-size:12.5px;line-height:18px;color:#000;">1</span>
<div style="left:78px;top:547px;width:89px;height:22px;background:#6fb1e8;border:1px solid #111;"></div>
<span class="t" style="left:78px;top:549px;width:82px;text-align:right;font-size:12.500px;line-height:18px;color:#fff;">2,022</span>
<span class="t" style="left:172px;top:549px;font-size:12px;line-height:18px;color:#000;">江苏省</span>
<span class="t" style="left:254px;top:549px;width:142px;text-align:right;font-size:12.500px;line-height:18px;color:#000;">1,869,266,327.42</span>
<span class="t" style="left:402px;top:549px;width:106px;text-align:right;font-size:12.500px;line-height:18px;color:#000;">6,008,903</span>
<span class="t" style="left:514px;top:549px;width:106px;text-align:right;font-size:12.500px;line-height:18px;color:#000;">0.13994</span>
<div style="left:627px;top:589px;width:930px;height:1px;background:#f2f2f2;"></div>
<div style="left:49px;top:569px;width:30px;height:20px;background:#ffffff;border-right:1px solid #606060;"></div>
<div style="left:49px;top:589px;width:30px;height:1px;background:#606060;"></div>
<span class="t" style="left:53px;top:570px;font-size:12.5px;line-height:18px;color:#000;">2</span>
<span class="t" style="left:78px;top:570px;width:82px;text-align:right;font-size:12.500px;line-height:18px;color:#000;">2,022</span>
<span class="t" style="left:172px;top:570px;font-size:12px;line-height:18px;color:#000;">山东省</span>
<span class="t" style="left:254px;top:570px;width:142px;text-align:right;font-size:12.500px;line-height:18px;color:#000;">1,031,871,970.14</span>
<span class="t" style="left:402px;top:570px;width:106px;text-align:right;font-size:12.500px;line-height:18px;color:#000;">3,147,342</span>
<span class="t" style="left:514px;top:570px;width:106px;text-align:right;font-size:12.500px;line-height:18px;color:#000;">0.0733</span>
<div style="left:78px;top:590px;width:548px;height:20px;background:#e0ebf7;"></div>
<div style="left:627px;top:610px;width:930px;height:1px;background:#f2f2f2;"></div>
<div style="left:49px;top:590px;width:30px;height:20px;background:#ffffff;border-right:1px solid #606060;"></div>
<div style="left:49px;top:610px;width:30px;height:1px;background:#606060;"></div>
<span class="t" style="left:53px;top:591px;font-size:12.5px;line-height:18px;color:#000;">3</span>
<span class="t" style="left:78px;top:591px;width:82px;text-align:right;font-size:12.500px;line-height:18px;color:#000;">2,022</span>
<span class="t" style="left:172px;top:591px;font-size:12px;line-height:18px;color:#000;">广东省</span>
<span class="t" style="left:254px;top:591px;width:142px;text-align:right;font-size:12.500px;line-height:18px;color:#000;">893,780,337.45</span>
<span class="t" style="left:402px;top:591px;width:106px;text-align:right;font-size:12.500px;line-height:18px;color:#000;">2,604,761</span>
<span class="t" style="left:514px;top:591px;width:106px;text-align:right;font-size:12.500px;line-height:18px;color:#000;">0.06066</span>
<div style="left:627px;top:631px;width:930px;height:1px;background:#f2f2f2;"></div>
<div style="left:49px;top:611px;width:30px;height:20px;background:#ffffff;border-right:1px solid #606060;"></div>
<div style="left:49px;top:631px;width:30px;height:1px;background:#606060;"></div>
<span class="t" style="left:53px;top:612px;font-size:12.5px;line-height:18px;color:#000;">4</span>
<span class="t" style="left:78px;top:612px;width:82px;text-align:right;font-size:12.500px;line-height:18px;color:#000;">2,022</span>
<span class="t" style="left:172px;top:612px;font-size:12px;line-height:18px;color:#000;">四川省</span>
<span class="t" style="left:254px;top:612px;width:142px;text-align:right;font-size:12.500px;line-height:18px;color:#000;">868,381,568.1</span>
<span class="t" style="left:402px;top:612px;width:106px;text-align:right;font-size:12.500px;line-height:18px;color:#000;">2,648,367</span>
<span class="t" style="left:514px;top:612px;width:106px;text-align:right;font-size:12.500px;line-height:18px;color:#000;">0.06168</span>
<div style="left:78px;top:632px;width:548px;height:20px;background:#e0ebf7;"></div>
<div style="left:627px;top:652px;width:930px;height:1px;background:#f2f2f2;"></div>
<div style="left:49px;top:632px;width:30px;height:20px;background:#ffffff;border-right:1px solid #606060;"></div>
<div style="left:49px;top:652px;width:30px;height:1px;background:#606060;"></div>
<span class="t" style="left:53px;top:633px;font-size:12.5px;line-height:18px;color:#000;">5</span>
<span class="t" style="left:78px;top:633px;width:82px;text-align:right;font-size:12.500px;line-height:18px;color:#000;">2,022</span>
<span class="t" style="left:172px;top:633px;font-size:12px;line-height:18px;color:#000;">安徽省</span>
<span class="t" style="left:254px;top:633px;width:142px;text-align:right;font-size:12.500px;line-height:18px;color:#000;">799,095,841.94</span>
<span class="t" style="left:402px;top:633px;width:106px;text-align:right;font-size:12.500px;line-height:18px;color:#000;">2,323,322</span>
<span class="t" style="left:514px;top:633px;width:106px;text-align:right;font-size:12.500px;line-height:18px;color:#000;">0.05411</span>
<div style="left:627px;top:673px;width:930px;height:1px;background:#f2f2f2;"></div>
<div style="left:49px;top:653px;width:30px;height:20px;background:#ffffff;border-right:1px solid #606060;"></div>
<div style="left:49px;top:673px;width:30px;height:1px;background:#606060;"></div>
<span class="t" style="left:53px;top:654px;font-size:12.5px;line-height:18px;color:#000;">6</span>
<span class="t" style="left:78px;top:654px;width:82px;text-align:right;font-size:12.500px;line-height:18px;color:#000;">2,022</span>
<span class="t" style="left:172px;top:654px;font-size:12px;line-height:18px;color:#000;">浙江省</span>
<span class="t" style="left:254px;top:654px;width:142px;text-align:right;font-size:12.500px;line-height:18px;color:#000;">755,684,406.21</span>
<span class="t" style="left:402px;top:654px;width:106px;text-align:right;font-size:12.500px;line-height:18px;color:#000;">2,139,665</span>
<span class="t" style="left:514px;top:654px;width:106px;text-align:right;font-size:12.500px;line-height:18px;color:#000;">0.04983</span>
<div style="left:78px;top:674px;width:548px;height:20px;background:#e0ebf7;"></div>
<div style="left:627px;top:694px;width:930px;height:1px;background:#f2f2f2;"></div>
<div style="left:49px;top:674px;width:30px;height:20px;background:#ffffff;border-right:1px solid #606060;"></div>
<div style="left:49px;top:694px;width:30px;height:1px;background:#606060;"></div>
<span class="t" style="left:53px;top:675px;font-size:12.5px;line-height:18px;color:#000;">7</span>
<span class="t" style="left:78px;top:675px;width:82px;text-align:right;font-size:12.500px;line-height:18px;color:#000;">2,022</span>
<span class="t" style="left:172px;top:675px;font-size:12px;line-height:18px;color:#000;">河南省</span>
<span class="t" style="left:254px;top:675px;width:142px;text-align:right;font-size:12.500px;line-height:18px;color:#000;">723,977,249.45</span>
<span class="t" style="left:402px;top:675px;width:106px;text-align:right;font-size:12.500px;line-height:18px;color:#000;">2,328,394</span>
<span class="t" style="left:514px;top:675px;width:106px;text-align:right;font-size:12.500px;line-height:18px;color:#000;">0.05423</span>
<div style="left:627px;top:715px;width:930px;height:1px;background:#f2f2f2;"></div>
<div style="left:49px;top:695px;width:30px;height:20px;background:#ffffff;border-right:1px solid #606060;"></div>
<div style="left:49px;top:715px;width:30px;height:1px;background:#606060;"></div>
<span class="t" style="left:53px;top:696px;font-size:12.5px;line-height:18px;color:#000;">8</span>
<span class="t" style="left:78px;top:696px;width:82px;text-align:right;font-size:12.500px;line-height:18px;color:#000;">2,022</span>
<span class="t" style="left:172px;top:696px;font-size:12px;line-height:18px;color:#000;">湖北省</span>
<span class="t" style="left:254px;top:696px;width:142px;text-align:right;font-size:12.500px;line-height:18px;color:#000;">678,009,214.07</span>
<span class="t" style="left:402px;top:696px;width:106px;text-align:right;font-size:12.500px;line-height:18px;color:#000;">2,240,979</span>
<span class="t" style="left:514px;top:696px;width:106px;text-align:right;font-size:12.500px;line-height:18px;color:#000;">0.05219</span>
<div style="left:78px;top:716px;width:548px;height:20px;background:#e0ebf7;"></div>
<div style="left:627px;top:736px;width:930px;height:1px;background:#f2f2f2;"></div>
<div style="left:49px;top:716px;width:30px;height:20px;background:#ffffff;border-right:1px solid #606060;"></div>
<div style="left:49px;top:736px;width:30px;height:1px;background:#606060;"></div>
<span class="t" style="left:53px;top:717px;font-size:12.5px;line-height:18px;color:#000;">9</span>
<span class="t" style="left:78px;top:717px;width:82px;text-align:right;font-size:12.500px;line-height:18px;color:#000;">2,022</span>
<span class="t" style="left:172px;top:717px;font-size:12px;line-height:18px;color:#000;">河北省</span>
<span class="t" style="left:254px;top:717px;width:142px;text-align:right;font-size:12.500px;line-height:18px;color:#000;">654,027,832.9</span>
<span class="t" style="left:402px;top:717px;width:106px;text-align:right;font-size:12.500px;line-height:18px;color:#000;">2,246,742</span>
<span class="t" style="left:514px;top:717px;width:106px;text-align:right;font-size:12.500px;line-height:18px;color:#000;">0.05233</span>
<div style="left:627px;top:757px;width:930px;height:1px;background:#f2f2f2;"></div>
<div style="left:49px;top:737px;width:30px;height:20px;background:#ffffff;border-right:1px solid #606060;"></div>
<div style="left:49px;top:757px;width:30px;height:1px;background:#606060;"></div>
<span class="t" style="left:53px;top:738px;font-size:12.5px;line-height:18px;color:#000;">10</span>
<span class="t" style="left:78px;top:738px;width:82px;text-align:right;font-size:12.500px;line-height:18px;color:#000;">2,022</span>
<span class="t" style="left:172px;top:738px;font-size:12px;line-height:18px;color:#000;">湖南省</span>
<span class="t" style="left:254px;top:738px;width:142px;text-align:right;font-size:12.500px;line-height:18px;color:#000;">468,728,166.48</span>
<span class="t" style="left:402px;top:738px;width:106px;text-align:right;font-size:12.500px;line-height:18px;color:#000;">1,519,280</span>
<span class="t" style="left:514px;top:738px;width:106px;text-align:right;font-size:12.500px;line-height:18px;color:#000;">0.03538</span>
<div style="left:78px;top:758px;width:548px;height:20px;background:#e0ebf7;"></div>
<div style="left:627px;top:778px;width:930px;height:1px;background:#f2f2f2;"></div>
<div style="left:49px;top:758px;width:30px;height:20px;background:#ffffff;border-right:1px solid #606060;"></div>
<div style="left:49px;top:778px;width:30px;height:1px;background:#606060;"></div>
<span class="t" style="left:53px;top:759px;font-size:12.5px;line-height:18px;color:#000;">11</span>
<span class="t" style="left:78px;top:759px;width:82px;text-align:right;font-size:12.500px;line-height:18px;color:#000;">2,022</span>
<span class="t" style="left:172px;top:759px;font-size:12px;line-height:18px;color:#000;">上海市</span>
<span class="t" style="left:254px;top:759px;width:142px;text-align:right;font-size:12.500px;line-height:18px;color:#000;">436,815,369.97</span>
<span class="t" style="left:402px;top:759px;width:106px;text-align:right;font-size:12.500px;line-height:18px;color:#000;">1,139,361</span>
<span class="t" style="left:514px;top:759px;width:106px;text-align:right;font-size:12.500px;line-height:18px;color:#000;">0.02654</span>
<div style="left:627px;top:799px;width:930px;height:1px;background:#f2f2f2;"></div>
<div style="left:49px;top:779px;width:30px;height:20px;background:#ffffff;border-right:1px solid #606060;"></div>
<div style="left:49px;top:799px;width:30px;height:1px;background:#606060;"></div>
<span class="t" style="left:53px;top:780px;font-size:12.5px;line-height:18px;color:#000;">12</span>
<span class="t" style="left:78px;top:780px;width:82px;text-align:right;font-size:12.500px;line-height:18px;color:#000;">2,022</span>
<span class="t" style="left:172px;top:780px;font-size:12px;line-height:18px;color:#000;">陕西省</span>
<span class="t" style="left:254px;top:780px;width:142px;text-align:right;font-size:12.500px;line-height:18px;color:#000;">411,695,507.58</span>
<span class="t" style="left:402px;top:780px;width:106px;text-align:right;font-size:12.500px;line-height:18px;color:#000;">1,388,314</span>
<span class="t" style="left:514px;top:780px;width:106px;text-align:right;font-size:12.500px;line-height:18px;color:#000;">0.03233</span>
<div style="left:254px;top:548px;width:1px;height:252px;background:rgba(248,250,253,0.750);"></div>
<div style="left:402px;top:548px;width:1px;height:252px;background:rgba(248,250,253,0.750);"></div>
<div style="left:514px;top:548px;width:1px;height:252px;background:rgba(248,250,253,0.750);"></div>
<div style="left:626px;top:548px;width:1px;height:252px;background:rgba(248,250,253,0.750);"></div>
<div style="left:166px;top:569px;width:1px;height:231px;background:rgba(248,250,253,0.750);"></div>
<div style="left:78px;top:800px;width:548px;height:1px;background:#e0ebf7;"></div>
<div style="left:1557px;top:519px;width:17px;height:282px;background:#f5f5f5;"></div>
<svg style="left:1561px;top:525px;" width="9" height="7" viewBox="0 0 9 7"><path d="M1 5.500l3.500-4 3.500 4" stroke="#444" stroke-width="1.700" fill="none"/></svg>
<svg style="left:1561px;top:790px;" width="9" height="7" viewBox="0 0 9 7"><path d="M1 1.500l3.500 4 3.500-4" stroke="#444" stroke-width="1.700" fill="none"/></svg>
<div style="left:1558px;top:536px;width:15px;height:26px;background:#c8cdc8;"></div>
<svg style="left:1578px;top:528px;" width="16" height="15" viewBox="0 0 16 15"><rect x="1" y="1" width="14" height="12" fill="#fff" stroke="#1a8fd4" stroke-width="1.400"/><rect x="6" y="1" width="9" height="7" fill="#45b1e8"/><circle cx="3.500" cy="11.500" r="2.800" fill="#1a8fd4"/></svg>
<span class="t" style="left:1594px;top:544px;font-size:12px;line-height:16px;transform:rotate(90deg);transform-origin:0 0;">面板</span>
<svg style="left:1578px;top:586px;" width="15" height="14" viewBox="0 0 15 14"><rect x="0.700" y="0.700" width="13.600" height="12.600" fill="#fff" stroke="#1a8fd4" stroke-width="1.400"/><rect x="1.400" y="1.400" width="12.200" height="8" fill="#bfe3f7"/><rect x="1.5" y="1.5" width="2" height="2" fill="#1a8fd4"/><rect x="1.5" y="5.5" width="2" height="2" fill="#1a8fd4"/><rect x="3.5" y="3.5" width="2" height="2" fill="#1a8fd4"/><rect x="3.5" y="7.5" width="2" height="2" fill="#1a8fd4"/><rect x="5.5" y="1.5" width="2" height="2" fill="#1a8fd4"/><rect x="5.5" y="5.5" width="2" height="2" fill="#1a8fd4"/><rect x="7.5" y="3.5" width="2" height="2" fill="#1a8fd4"/><rect x="7.5" y="7.5" width="2" height="2" fill="#1a8fd4"/><rect x="9.5" y="1.5" width="2" height="2" fill="#1a8fd4"/><rect x="9.5" y="5.5" width="2" height="2" fill="#1a8fd4"/><rect x="11.5" y="3.5" width="2" height="2" fill="#1a8fd4"/><rect x="11.5" y="7.5" width="2" height="2" fill="#1a8fd4"/></svg>
<svg style="left:1577px;top:607px;" width="16" height="16" viewBox="0 0 16 16"><circle cx="8" cy="8" r="7" fill="#fff" stroke="#1a8fd4" stroke-width="1.400"/><circle cx="5.800" cy="5.800" r="1.200" fill="#1a8fd4"/><circle cx="10.200" cy="5.800" r="1.200" fill="#1a8fd4"/><circle cx="5.800" cy="10.200" r="1.200" fill="#1a8fd4"/><circle cx="10.200" cy="10.200" r="1.200" fill="#1a8fd4"/></svg>
<svg style="left:1578px;top:629px;" width="15" height="16" viewBox="0 0 15 16"><rect x="0.700" y="5.700" width="13.600" height="9.600" fill="#fff" stroke="#1a8fd4" stroke-width="1.400"/><path d="M0.700 9h13.600M0.700 12h13.600M4 6v9M10 6v9" stroke="#1a8fd4" stroke-width="1"/><rect x="5.500" y="4" width="3.500" height="11" fill="#f28500" opacity=".85"/><path d="M7.200 0v3" stroke="#f28500" stroke-width="1.300"/></svg>
<svg style="left:1578px;top:651px;" width="15" height="15" viewBox="0 0 15 15"><rect x="0.700" y="0.700" width="13.600" height="12.600" fill="#fff" stroke="#1a8fd4" stroke-width="1.400"/><rect x="1" y="3" width="7" height="5" fill="#45b1e8"/><path d="M1 3h13" stroke="#1a8fd4" stroke-width="1.500"/><path d="M9 11.500h5M9 10v3M14 10v3" stroke="#1a8fd4" stroke-width="1"/></svg>
<svg style="left:1578px;top:673px;" width="15" height="15" viewBox="0 0 15 15"><rect x="0.500" y="0.500" width="6" height="6" rx="2" fill="#1a8fd4"/><rect x="8.500" y="0.500" width="6" height="6" rx="2" fill="#1a8fd4"/><rect x="0.500" y="8.500" width="6" height="6" rx="2" fill="#1a8fd4"/><rect x="8.500" y="8.500" width="6" height="6" rx="2" fill="#f28500"/><path d="M2 3.500h3M10 3.500h3M11.500 2v3M2 10l3 3M5 10l-3 3M10 10.500h3M10 12.500h3" stroke="#fff" stroke-width="1"/></svg>
<svg style="left:1577px;top:814px;" width="17" height="16" viewBox="0 0 17 16"><rect x="0.500" y="1.500" width="4.600" height="13.500" rx="1.500" fill="#1a8fd4"/><path d="M6.500 13.300h7.500" stroke="#1a8fd4" stroke-width="3" stroke-linecap="round"/><path d="M14.300 11v-2.500c0-2.500-1.500-4-4.500-4" stroke="#1a8fd4" stroke-width="2" fill="none"/><path d="M10.800 0.500v7.600l-4.300-3.800z" fill="#1a8fd4"/></svg>
<div style="left:23px;top:833px;width:1576px;height:1px;background:#d8d8d8;"></div>
<svg style="left:59.5px;top:808px;" width="16" height="17" viewBox="0 0 15 16"><path d="M2 9.500a5.500 5.500 0 0 1 9.500-4.500M13 6.500a5.500 5.500 0 0 1-9.500 4.500" stroke="#1a8fd4" stroke-width="1.600" fill="none"/><path d="M12.500 1.500v4.500h-4.500M2.500 14.500v-4.500h4.500" stroke="#1a8fd4" stroke-width="1.600" fill="none"/></svg>
<span class="t" style="letter-spacing:-0.008px;left:79px;top:809px;font-size:12px;line-height:18px;color:#000;">刷新</span>
<svg style="left:117px;top:815px;" width="8" height="5.0" viewBox="0 0 8 5.0"><path d="M0 0h8l-4.0 4.0z" fill="#1a1a1a"/></svg>
<svg style="left:134px;top:810px;" width="2" height="16" viewBox="0 0 2 16"><rect x="0" y="0.0" width="2" height="1.800" fill="#b5a993"/><rect x="0" y="3.3" width="2" height="1.800" fill="#b5a993"/><rect x="0" y="6.6" width="2" height="1.800" fill="#b5a993"/><rect x="0" y="9.9" width="2" height="1.800" fill="#b5a993"/><rect x="0" y="13.2" width="2" height="1.800" fill="#b5a993"/></svg>
<svg style="left:146px;top:808px;" width="16" height="16" viewBox="0 0 16 16"><circle cx="8" cy="8" r="6.800" stroke="#a8a8a8" stroke-width="1.300" fill="none"/><path d="M4.800 8l2.400 2.600 4.200-5" stroke="#a8a8a8" stroke-width="1.300" fill="none"/></svg>
<span class="t" style="letter-spacing:-0.008px;left:166px;top:809px;font-size:12px;line-height:18px;color:#a0a0a0;">保存</span>
<svg style="left:203px;top:815px;" width="8" height="5.0" viewBox="0 0 8 5.0"><path d="M0 0h8l-4.0 4.0z" fill="#555"/></svg>
<svg style="left:221px;top:810px;" width="13" height="13" viewBox="0 0 13 13"><rect x="0.600" y="0.600" width="11.800" height="11.800" stroke="#a8a8a8" stroke-width="1.200" fill="none"/><path d="M3.500 3.500l6 6M9.500 3.500l-6 6" stroke="#a8a8a8" stroke-width="1.200"/></svg>
<span class="t" style="letter-spacing:-0.008px;left:239px;top:809px;font-size:12px;line-height:18px;color:#a0a0a0;">取消</span>
<div style="left:273px;top:804px;width:1px;height:27px;background:#8a8a8a;"></div>
<svg style="left:284px;top:811px;" width="16" height="12" viewBox="0 0 16 12"><path d="M0 1h15M0 5.500h9M0 10h6" stroke="#1a8fd4" stroke-width="1.700"/><path d="M9 11l5.500-5.500" stroke="#1a8fd4" stroke-width="2"/></svg>
<svg style="left:308px;top:811px;" width="16" height="12" viewBox="0 0 16 12"><path d="M0 1h15M0 5.500h9M0 10h6" stroke="#a8a8a8" stroke-width="1.700"/><path d="M12 4.500v7M8.500 8h7" stroke="#a8a8a8" stroke-width="1.500"/></svg>
<svg style="left:332px;top:811px;" width="16" height="12" viewBox="0 0 16 12"><path d="M0 1h15M0 5.500h9M0 10h6" stroke="#a8a8a8" stroke-width="1.700"/><rect x="7.500" y="4.500" width="7" height="7" rx="2" fill="#f5f5f5" stroke="#a8a8a8" stroke-width="1"/><path d="M11 6v4M9 8h4" stroke="#a8a8a8" stroke-width="1"/></svg>
<svg style="left:356px;top:811px;" width="16" height="12" viewBox="0 0 16 12"><path d="M0 1h15M0 5.500h9M0 10h6" stroke="#a8a8a8" stroke-width="1.700"/><path d="M9 10h6" stroke="#a8a8a8" stroke-width="1.700"/></svg>
<svg style="left:379px;top:810px;" width="2" height="16" viewBox="0 0 2 16"><rect x="0" y="0.0" width="2" height="1.800" fill="#b5a993"/><rect x="0" y="3.3" width="2" height="1.800" fill="#b5a993"/><rect x="0" y="6.6" width="2" height="1.800" fill="#b5a993"/><rect x="0" y="9.9" width="2" height="1.800" fill="#b5a993"/><rect x="0" y="13.2" width="2" height="1.800" fill="#b5a993"/></svg>
<svg style="left:387px;top:810px;" width="12" height="14" viewBox="0 0 12 14"><path d="M1 0v14M11 0.500l-6.500 6.500 6.500 6.500" stroke="#9a9a9a" stroke-width="1.800" fill="none"/></svg>
<svg style="left:413px;top:810px;" width="12" height="14" viewBox="0 0 12 14"><path d="M8 0.500l-6.500 6.500 6.500 6.500" stroke="#9a9a9a" stroke-width="1.800" fill="none"/></svg>
<svg style="left:437px;top:810px;" width="12" height="14" viewBox="0 0 12 14"><path d="M1.500 0.500l6.500 6.500-6.500 6.500" stroke="#1a8fd4" stroke-width="1.800" fill="none"/></svg>
<svg style="left:457px;top:810px;" width="12" height="14" viewBox="0 0 12 14"><path d="M11 0v14M1 0.500l6.500 6.500-6.500 6.500" stroke="#1a8fd4" stroke-width="1.800" fill="none"/></svg>
<svg style="left:479px;top:810px;" width="14" height="14" viewBox="0 0 14 14"><path d="M1 4v-3h3M10 1h3v3M13 10v3h-3M4 13h-3v-3" stroke="#a8a8a8" stroke-width="1.300" fill="none"/><path d="M4.500 4h3.500l1.500 1.500v4.500h-5z" stroke="#a8a8a8" stroke-width="1" fill="none"/></svg>
<svg style="left:501px;top:810px;" width="2" height="16" viewBox="0 0 2 16"><rect x="0" y="0.0" width="2" height="1.800" fill="#b5a993"/><rect x="0" y="3.3" width="2" height="1.800" fill="#b5a993"/><rect x="0" y="6.6" width="2" height="1.800" fill="#b5a993"/><rect x="0" y="9.9" width="2" height="1.800" fill="#b5a993"/><rect x="0" y="13.2" width="2" height="1.800" fill="#b5a993"/></svg>
<svg style="left:516px;top:808px;" width="14" height="16" viewBox="0 0 14 16"><path d="M7 11v-9.500M3 5l4-4 4 4M1 10.500v4.500h12v-4.500" stroke="#1a8fd4" stroke-width="1.600" fill="none"/></svg>
<span class="t" style="letter-spacing:-0.145px;left:536px;top:809px;font-size:12px;line-height:18px;color:#000;">导出数据...</span>
<svg style="left:607px;top:815px;" width="8" height="5.0" viewBox="0 0 8 5.0"><path d="M0 0h8l-4.0 4.0z" fill="#1a1a1a"/></svg>
<svg style="left:624px;top:810px;" width="2" height="16" viewBox="0 0 2 16"><rect x="0" y="0.0" width="2" height="1.800" fill="#b5a993"/><rect x="0" y="3.3" width="2" height="1.800" fill="#b5a993"/><rect x="0" y="6.6" width="2" height="1.800" fill="#b5a993"/><rect x="0" y="9.9" width="2" height="1.800" fill="#b5a993"/><rect x="0" y="13.2" width="2" height="1.800" fill="#b5a993"/></svg>
<svg style="left:632px;top:809px;" width="15" height="15" viewBox="0 0 16 16"><path d="M8 0.500l1.500 2.200 2.600-.7.300 2.700 2.600.8-1.200 2.500 1.200 2.500-2.600.8-.3 2.700-2.600-.7-1.500 2.200-1.500-2.200-2.600.7-.3-2.700-2.600-.8 1.200-2.500-1.200-2.500 2.600-.8.300-2.700 2.600.7z" fill="#1a8fd4"/><circle cx="8" cy="8" r="2.300" fill="#f5f5f5"/></svg>
<div style="left:653px;top:806px;width:55px;height:23px;background:#ffffff;border:1px solid #7a7a7a;"></div>
<span class="t" style="letter-spacing:-0.01px;left:658px;top:809px;font-size:12px;line-height:18px;color:#000;">200</span>
<svg style="left:715px;top:808px;" width="15" height="16" viewBox="0 0 15 16"><path d="M3 1l4.500 5 4.500-5M7.500 6v5" stroke="#1a8fd4" stroke-width="1.400" fill="none"/><path d="M1 10v4.500h13v-4.500" stroke="#1a8fd4" stroke-width="1.400" fill="none"/></svg>
<span class="t" style="letter-spacing:0.323px;left:737px;top:809px;font-size:12px;line-height:18px;color:#000;">124</span>
<svg style="left:766px;top:810px;" width="2" height="16" viewBox="0 0 2 16"><rect x="0" y="0.0" width="2" height="1.800" fill="#b5a993"/><rect x="0" y="3.3" width="2" height="1.800" fill="#b5a993"/><rect x="0" y="6.6" width="2" height="1.800" fill="#b5a993"/><rect x="0" y="9.9" width="2" height="1.800" fill="#b5a993"/><rect x="0" y="13.2" width="2" height="1.800" fill="#b5a993"/></svg>
<span class="t" style="left:793px;top:807px;font-size:10px;line-height:18px;color:#555;">...</span>
<span class="t" style="letter-spacing:0.309px;left:812px;top:809px;font-size:12px;line-height:18px;color:#000;">124 行已获取 - 16.177s (2ms 获取), 2025-10-23 13:49:36</span>
<div style="left:779px;top:834px;width:1px;height:22px;background:#9a9a9a;"></div>
<div style="left:815px;top:834px;width:1px;height:22px;background:#9a9a9a;"></div>
<div style="left:841px;top:834px;width:1px;height:22px;background:#9a9a9a;"></div>
<div style="left:975px;top:834px;width:1px;height:22px;background:#9a9a9a;"></div>
<div style="left:1104px;top:834px;width:1px;height:22px;background:#9a9a9a;"></div>
<div style="left:1232px;top:834px;width:1px;height:22px;background:#9a9a9a;"></div>
<span class="t" style="letter-spacing:-0.667px;left:786px;top:836px;font-size:12px;line-height:18px;color:#000;">CST</span>
<span class="t" style="letter-spacing:0.156px;left:822px;top:836px;font-size:12px;line-height:18px;color:#000;">zh</span>
<span class="t" style="letter-spacing:-0.008px;left:849px;top:836px;font-size:12px;line-height:18px;color:#000;">可写</span>
<span class="t" style="letter-spacing:-0.004px;left:983px;top:836px;font-size:12px;line-height:18px;color:#000;">智能插入</span>
<span class="t" style="letter-spacing:0.328px;left:1111px;top:836px;font-size:12px;line-height:18px;color:#000;">765 : 41 : 21502</span>
<span class="t" style="letter-spacing:0.184px;left:1239px;top:836px;font-size:12px;line-height:18px;color:#000;">Sel: 0 | 0</span>
<svg style="left:1316px;top:840px;" width="2" height="16" viewBox="0 0 2 16"><rect x="0" y="0.0" width="2" height="1.800" fill="#b5a993"/><rect x="0" y="3.3" width="2" height="1.800" fill="#b5a993"/><rect x="0" y="6.6" width="2" height="1.800" fill="#b5a993"/><rect x="0" y="9.9" width="2" height="1.800" fill="#b5a993"/><rect x="0" y="13.2" width="2" height="1.800" fill="#b5a993"/></svg>
<div style="left:0px;top:860px;width:1600px;height:40px;background:#000000;"></div>
<div style="left:1595px;top:860px;width:1px;height:40px;background:#555555;"></div>
<div style="left:294px;top:860px;width:48px;height:40px;background:#323232;"></div>
<div style="left:338px;top:860px;width:1px;height:40px;background:#262626;"></div>
<div style="left:294px;top:898px;width:48px;height:2px;background:#5fa8dc;"></div>
<div style="left:294px;top:898px;width:44px;height:2px;background:#76c3f5;"></div>
<svg style="left:15px;top:871px;" width="18" height="18" viewBox="0 0 18 18"><path d="M0.500 3l7-1v6.500h-7zM8.500 1.800l9-1.300v8h-9zM0.500 9.500h7v6.500l-7-1zM8.500 9.500h9v8l-9-1.300z" fill="#fff"/></svg>
<svg style="left:63px;top:870px;" width="19" height="19" viewBox="0 0 19 19"><circle cx="12" cy="7" r="5.300" stroke="#fff" stroke-width="1.500" fill="none"/><path d="M8.300 10.700l-7 7" stroke="#fff" stroke-width="1.500"/></svg>
<svg style="left:111px;top:871px;" width="18" height="17" viewBox="0 0 18 17"><rect x="2.500" y="4.500" width="9" height="8" stroke="#fff" stroke-width="1.300" fill="none"/><path d="M1 1.500h12M1 15.500h12M15.500 1v3M15.500 7v9" stroke="#fff" stroke-width="1.300"/><path d="M1 1v2M13 1v2M1 16v-2M13 16v-2" stroke="#fff" stroke-width="1.300"/></svg>
<svg style="left:158px;top:866px;" width="26" height="26" viewBox="0 0 26 26"><ellipse cx="13" cy="13" rx="13" ry="5.500" stroke="#f2c21a" stroke-width="2" fill="none" transform="rotate(-35 13 13)"/><path d="M21.500 15h-12.500a4.500 4.500 0 0 0 8.300 1.500h4a8.500 8.500 0 1 1 .2-4.500zM9 12h8.500a4.300 4.300 0 0 0-8.500 0z" fill="#2aa9e8"/><path d="M19 3.500c2.500-1.200 4.500-1 5 .3.300 1-.2 2.500-1.200 4" stroke="#f2c21a" stroke-width="2" fill="none"/></svg>
<svg style="left:209px;top:870px;" width="23" height="20" viewBox="0 0 23 20"><path d="M0 2.500a1.500 1.500 0 0 1 1.500-1.500h6.500l2 2h11.500a1.500 1.500 0 0 1 1.500 1.500v13.500a1.500 1.500 0 0 1-1.500 1.500h-20a1.500 1.500 0 0 1-1.500-1.500z" fill="#f4c64f"/><path d="M0 5h23v13a1.500 1.500 0 0 1-1.500 1.500h-20a1.500 1.500 0 0 1-1.500-1.500z" fill="#fbdb7e"/><rect x="5" y="11" width="13" height="8.500" fill="#2b9be8"/><rect x="8.500" y="15" width="6" height="4.500" fill="#fbdb7e"/></svg>
<svg style="left:256.6px;top:867.6px;" width="25" height="25" viewBox="0 0 25 25"><circle cx="12.500" cy="12.500" r="11.200" fill="#ffffff" stroke="#4cbabd" stroke-width="1.800"/><path d="M10.300 13.300c1.800 1.200 3.800 2.300 5.700 2.700l.9 3.900c-1.200 1.200-2.700 1.800-4.200 1.800-1.400 0-2.800-.3-3.900-.9.200-2.800.5-5.400 1.500-7.500z" fill="#3a302a"/><ellipse cx="16" cy="7.900" rx="2.100" ry="1.200" fill="#3a302a" transform="rotate(-15 16 7.900)"/><circle cx="10.500" cy="7.500" r=".700" fill="#3a302a"/><path d="M5.600 8.500c1.500-2.800 4-4.600 7.200-5" stroke="#6a625c" stroke-width=".800" fill="none"/><path d="M4.600 9.300c-.6 1.800-.3 3.800.9 5.200" stroke="#a8a09a" stroke-width="1.300" fill="none"/><path d="M17.200 11.800l-.8 4.200M15.400 12.500l.6 3.300" stroke="#3a302a" stroke-width=".800" fill="none"/></svg>
<svg style="left:305.4px;top:867.6px;" width="25" height="25" viewBox="0 0 25 25"><circle cx="12.500" cy="12.500" r="11.200" fill="#ffffff" stroke="#4cbabd" stroke-width="1.800"/><path d="M10.300 13.300c1.800 1.200 3.800 2.300 5.700 2.700l.9 3.900c-1.200 1.200-2.700 1.800-4.200 1.800-1.400 0-2.800-.3-3.900-.9.200-2.800.5-5.400 1.500-7.500z" fill="#3a302a"/><ellipse cx="16" cy="7.900" rx="2.100" ry="1.200" fill="#3a302a" transform="rotate(-15 16 7.900)"/><circle cx="10.500" cy="7.500" r=".700" fill="#3a302a"/><path d="M5.600 8.500c1.500-2.800 4-4.600 7.200-5" stroke="#6a625c" stroke-width=".800" fill="none"/><path d="M4.600 9.300c-.6 1.800-.3 3.800.9 5.200" stroke="#a8a09a" stroke-width="1.300" fill="none"/><path d="M17.200 11.800l-.8 4.200M15.400 12.500l.6 3.300" stroke="#3a302a" stroke-width=".800" fill="none"/></svg>
<svg style="left:1348px;top:876px;" width="12" height="8" viewBox="0 0 12 8"><path d="M1 7l5-5.500 5 5.500" stroke="#fff" stroke-width="1.300" fill="none"/></svg>
<svg style="left:1372px;top:871px;" width="11" height="18" viewBox="0 0 11 18"><rect x="2.500" y="0.700" width="5" height="4" stroke="#fff" stroke-width="1" fill="none"/><path d="M1 4.500h8v9l-2 3h-4l-2-3z" stroke="#fff" stroke-width="1.100" fill="none"/><circle cx="8.500" cy="14.500" r="2.300" fill="#000" stroke="#fff" stroke-width=".9"/></svg>
<svg style="left:1393px;top:873px;" width="16" height="15" viewBox="0 0 16 15"><rect x="3.500" y="0.700" width="11.500" height="8.500" stroke="#fff" stroke-width="1.200" fill="none"/><path d="M6 12.500h7M9.500 9.500v3" stroke="#fff" stroke-width="1.200"/><rect x="0.700" y="5.500" width="4" height="8" fill="#000" stroke="#fff" stroke-width="1.100"/></svg>
<svg style="left:1418px;top:873px;" width="17" height="15" viewBox="0 0 17 15"><path d="M1 5h3l4-3.500v12l-4-3.500h-3z" stroke="#fff" stroke-width="1.100" fill="none"/><path d="M10.500 5a3.500 3.500 0 0 1 0 5M12.500 3a6 6 0 0 1 0 9M14.500 1a9 9 0 0 1 0 13" stroke="#fff" stroke-width="1" fill="none"/></svg>
<span class="t" style="letter-spacing:-0.005px;left:1443px;top:871px;font-size:12px;line-height:18px;color:#fff;">ENG</span>
<span class="t" style="letter-spacing:0.394px;left:1494px;top:862px;font-size:12px;line-height:18px;color:#fff;">13:49</span>
<span class="t" style="letter-spacing:0.594px;left:1477px;top:880px;font-size:12px;line-height:18px;color:#fff;">2025/10/23</span>
<svg style="left:1560px;top:873px;" width="16" height="16" viewBox="0 0 16 16"><path d="M1 1h14v10.500h-7l-3.500 3.500v-3.500h-3.500z" stroke="#fff" stroke-width="1.200" fill="none"/></svg>
<div style="left:0;top:0;width:1600px;height:860px;overflow:hidden;pointer-events:none;">
<div class="wm" style="left:8px;top:-167px;width:300px;height:46px;">audit审计03(Audit3)
audit-172.18.210.237</div>
<div class="wm" style="left:308px;top:-167px;width:300px;height:46px;">audit审计03(Audit3)
audit-172.18.210.237</div>
<div class="wm" style="left:608px;top:-167px;width:300px;height:46px;">audit审计03(Audit3)
audit-172.18.210.237</div>
<div class="wm" style="left:908px;top:-167px;width:300px;height:46px;">audit审计03(Audit3)
audit-172.18.210.237</div>
<div class="wm" style="left:1208px;top:-167px;width:300px;height:46px;">audit审计03(Audit3)
audit-172.18.210.237</div>
<div class="wm" style="left:1508px;top:-167px;width:300px;height:46px;">audit审计03(Audit3)
audit-172.18.210.237</div>
<div class="wm" style="left:8px;top:133px;width:300px;height:46px;">audit审计03(Audit3)
audit-172.18.210.237</div>
<div class="wm" style="left:308px;top:133px;width:300px;height:46px;">audit审计03(Audit3)
audit-172.18.210.237</div>
<div class="wm" style="left:608px;top:133px;width:300px;height:46px;">audit审计03(Audit3)
audit-172.18.210.237</div>
<div class="wm" style="left:908px;top:133px;width:300px;height:46px;">audit审计03(Audit3)
audit-172.18.210.237</div>
<div class="wm" style="left:1208px;top:133px;width:300px;height:46px;">audit审计03(Audit3)
audit-172.18.210.237</div>
<div class="wm" style="left:1508px;top:133px;width:300px;height:46px;">audit审计03(Audit3)
audit-172.18.210.237</div>
<div class="wm" style="left:8px;top:433px;width:300px;height:46px;">audit审计03(Audit3)
audit-172.18.210.237</div>
<div class="wm" style="left:308px;top:433px;width:300px;height:46px;">audit审计03(Audit3)
audit-172.18.210.237</div>
<div class="wm" style="left:608px;top:433px;width:300px;height:46px;">audit审计03(Audit3)
audit-172.18.210.237</div>
<div class="wm" style="left:908px;top:433px;width:300px;height:46px;">audit审计03(Audit3)
audit-172.18.210.237</div>
<div class="wm" style="left:1208px;top:433px;width:300px;height:46px;">audit审计03(Audit3)
audit-172.18.210.237</div>
<div class="wm" style="left:1508px;top:433px;width:300px;height:46px;">audit审计03(Audit3)
audit-172.18.210.237</div>
<div class="wm" style="left:8px;top:733px;width:300px;height:46px;">audit审计03(Audit3)
audit-172.18.210.237</div>
<div class="wm" style="left:308px;top:733px;width:300px;height:46px;">audit审计03(Audit3)
audit-172.18.210.237</div>
<div class="wm" style="left:608px;top:733px;width:300px;height:46px;">audit审计03(Audit3)
audit-172.18.210.237</div>
<div class="wm" style="left:908px;top:733px;width:300px;height:46px;">audit审计03(Audit3)
audit-172.18.210.237</div>
<div class="wm" style="left:1208px;top:733px;width:300px;height:46px;">audit审计03(Audit3)
audit-172.18.210.237</div>
<div class="wm" style="left:1508px;top:733px;width:300px;height:46px;">audit审计03(Audit3)
audit-172.18.210.237</div>
</div>
</body></html>
